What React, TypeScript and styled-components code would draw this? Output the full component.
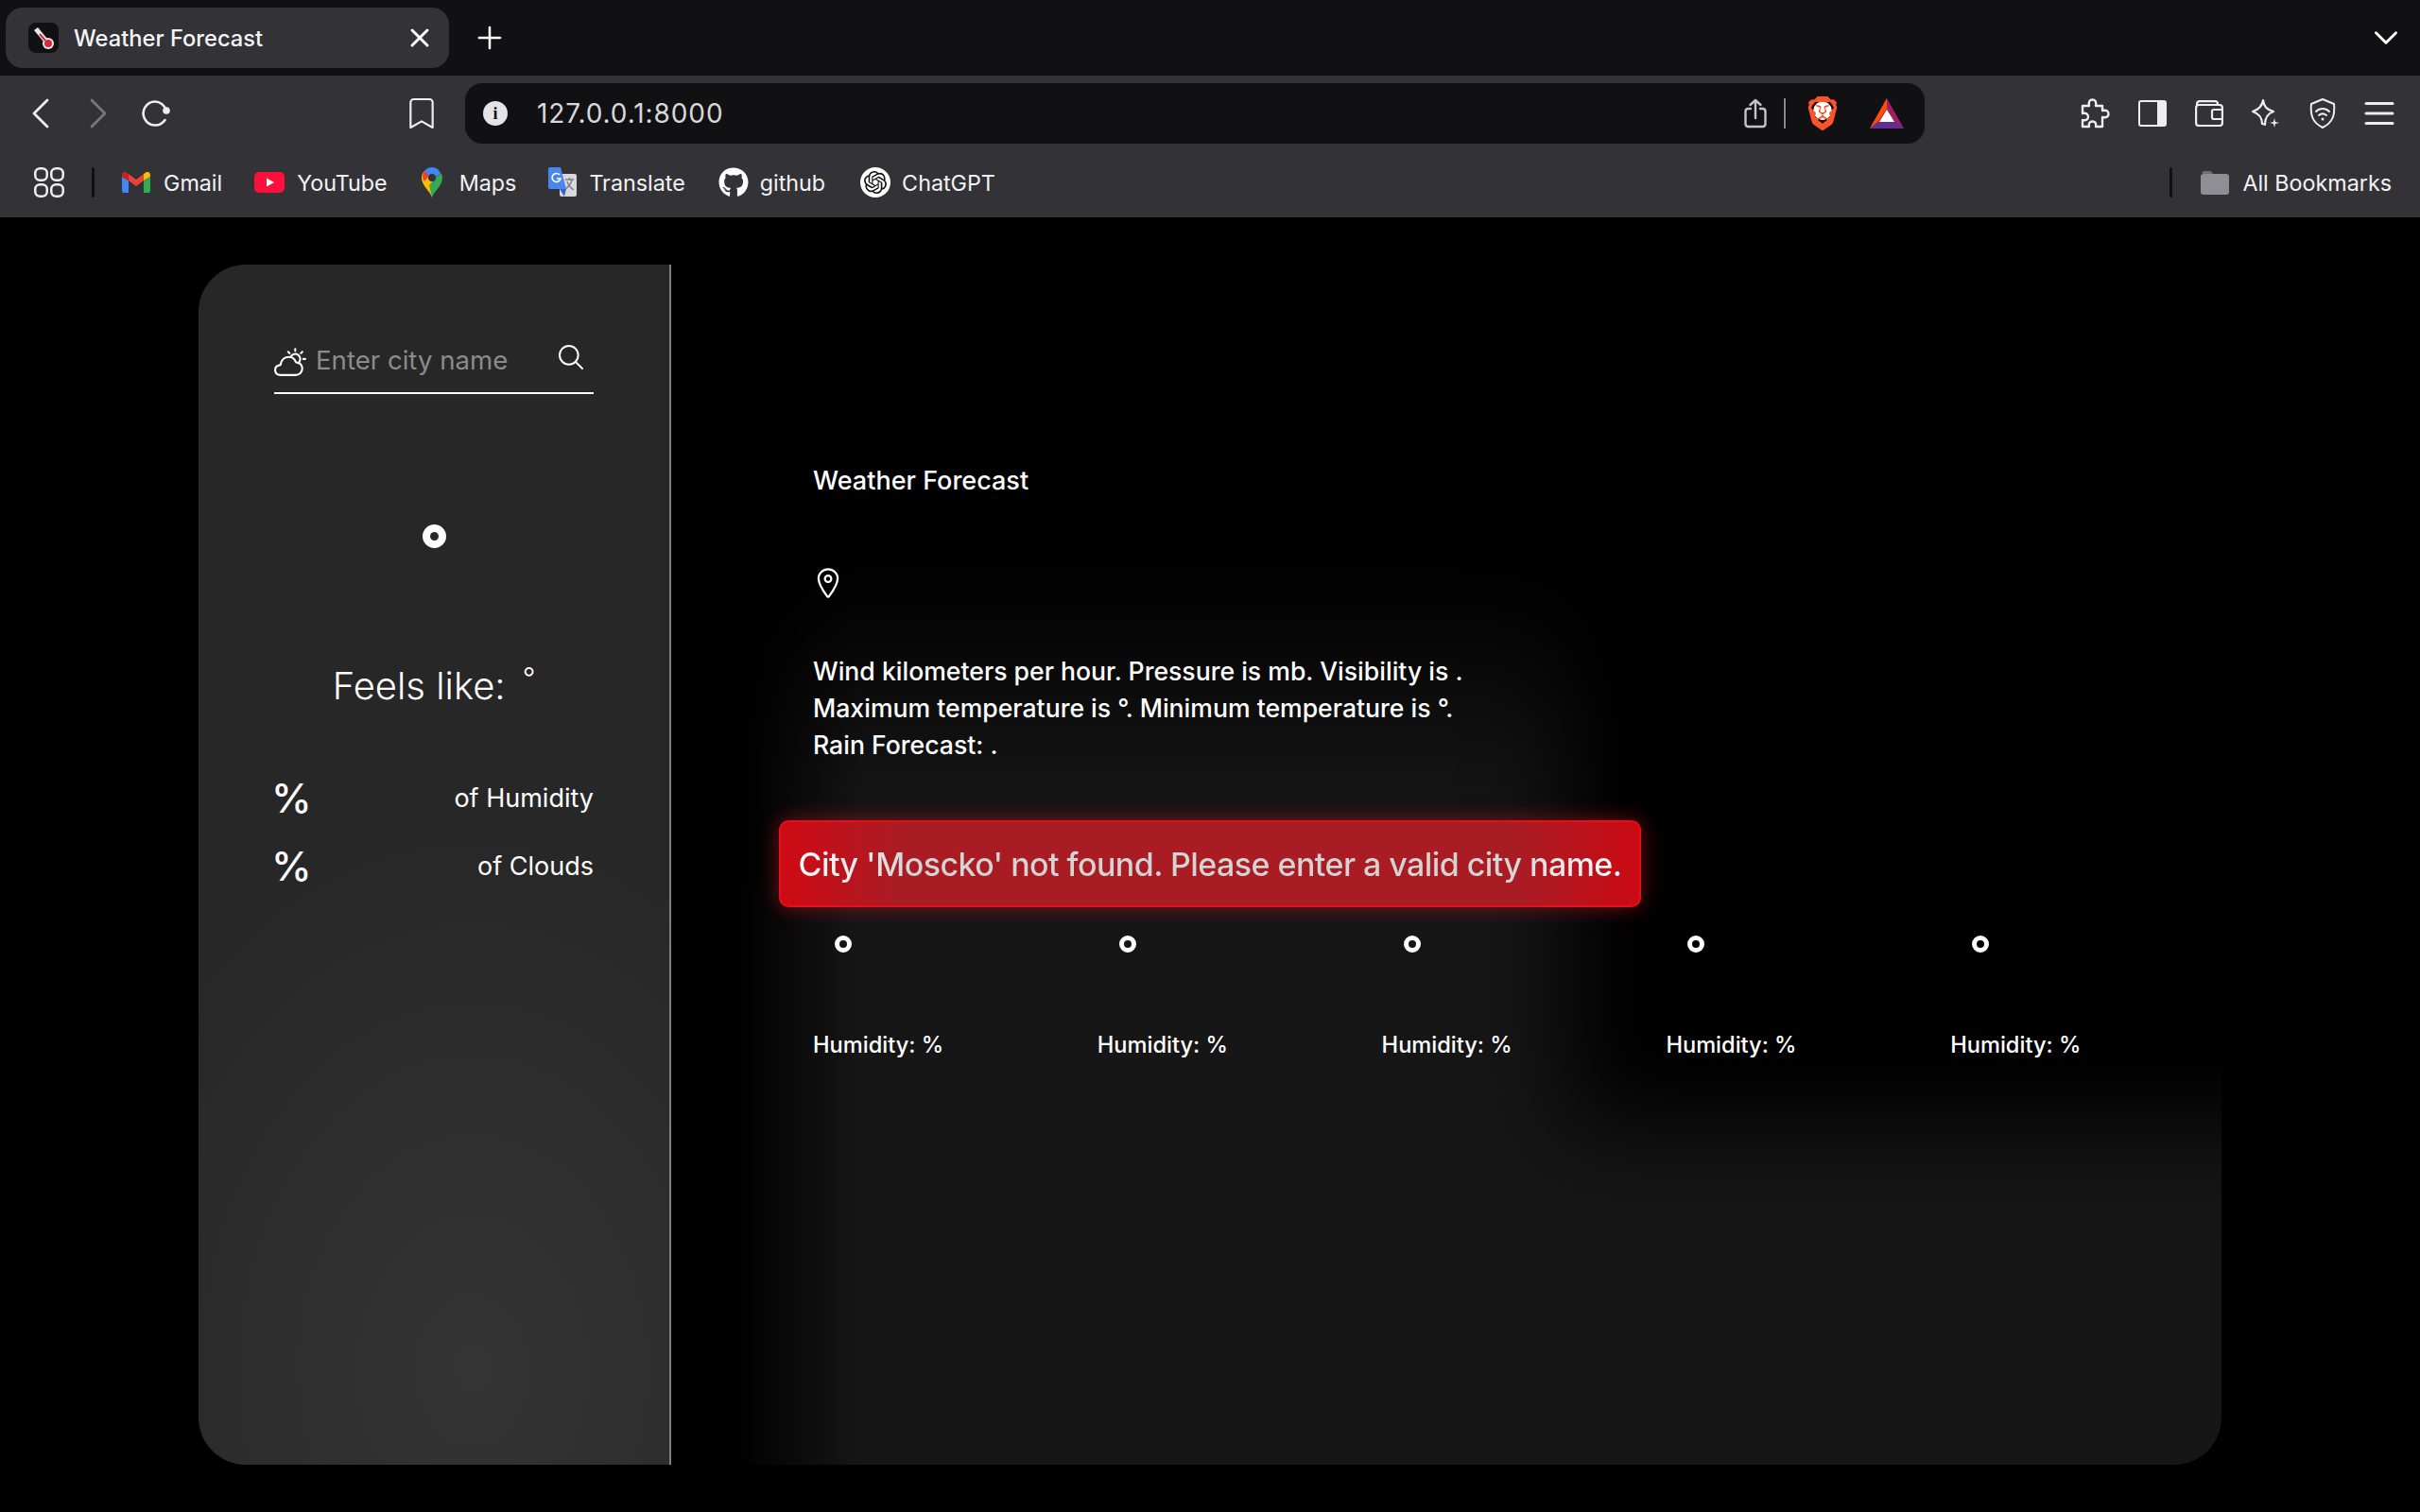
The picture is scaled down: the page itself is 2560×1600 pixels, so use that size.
import React from "react";
import styled, { createGlobalStyle } from "styled-components";
import { IoPartlySunnyOutline, IoSearchOutline, IoLocationOutline } from "react-icons/io5";
import { SiBrave, SiOpenai } from "react-icons/si";
import { FaGithub } from "react-icons/fa";
import { ChevronLeft, ChevronRight, ChevronDown, Bookmark, X, Plus } from "lucide-react";

const Global = createGlobalStyle`
  html, body { margin: 0; padding: 0; background: #000; }
  * { box-sizing: border-box; }
  body { font-family: Inter, "Liberation Sans", sans-serif; }
`;

const Window = styled.div`
  width: 2560px;
  height: 1600px;
  display: flex;
  flex-direction: column;
  background: #000;
  overflow: hidden;
`;

const TabStrip = styled.div`
  height: 80px;
  flex: none;
  background: #111113;
  display: flex;
  align-items: flex-start;
  padding: 8px 15px 0 6px;
  color: #fff;
`;
const Tab = styled.div`
  width: 469px;
  height: 64px;
  background: #323237;
  border-radius: 18px;
  display: flex;
  align-items: center;
  padding: 0 15px 0 24px;
`;
const Favicon = styled.span`
  width: 32px;
  height: 32px;
  background: #111113;
  border-radius: 8px;
  display: flex;
  align-items: center;
  justify-content: center;
  flex: none;
`;
const TabTitle = styled.span`
  margin-left: 16px;
  flex: 1;
  font-size: 23.7px;
  font-weight: 500;
  color: #f4f4f6;
`;
const NewTab = styled.span`
  height: 64px;
  margin-left: 24px;
  display: flex;
  align-items: center;
`;
const StripEnd = styled.span`
  margin-left: auto;
  height: 64px;
  display: flex;
  align-items: center;
`;

const Toolbar = styled.div`
  height: 76px;
  flex: none;
  background: #323237;
  display: flex;
  align-items: flex-start;
  padding: 8px 0 0 0;
  color: #eeeef0;
`;
const ToolSlot = styled.span<{ $w: number; $ml?: number; $dim?: boolean }>`
  width: ${(p) => p.$w}px;
  height: 64px;
  flex: none;
  margin-left: ${(p) => p.$ml ?? 0}px;
  display: flex;
  align-items: center;
  justify-content: center;
  color: ${(p) => (p.$dim ? "#77777c" : "#eeeef0")};
`;
const UrlBar = styled.div`
  width: 1544px;
  height: 64px;
  margin-left: 30px;
  flex: none;
  background: #111113;
  border-radius: 18px;
  display: flex;
  align-items: center;
  padding: 0 22px 0 19px;
`;
const InfoDot = styled.span`
  width: 26px;
  height: 26px;
  border-radius: 50%;
  background: #e4e4e8;
  color: #111113;
  font: 700 18px "Liberation Serif", serif;
  display: flex;
  align-items: center;
  justify-content: center;
  flex: none;
`;
const UrlText = styled.span`
  margin-left: 31px;
  flex: 1;
  font-size: 28px;
  letter-spacing: 0.9px;
  color: #d8d8dc;
`;
const UrlDivider = styled.span`
  width: 2px;
  height: 32px;
  background: #88888c;
  margin: 0 21px 0 18px;
  flex: none;
`;
const LionSlot = styled.span`
  display: flex;
  background: radial-gradient(circle at 50% 42%, #fff 0 34%, transparent 36%);
`;
const BatSlot = styled.span`
  margin-left: 32px;
  display: flex;
`;
const RightTools = styled.div`
  margin-left: 166px;
  display: flex;
  align-items: center;
  height: 64px;
  gap: 30px;
`;

const BookmarkBar = styled.div`
  height: 74px;
  flex: none;
  background: #323237;
  display: flex;
  align-items: center;
  padding: 0 30px 0 36px;
  color: #f2f2f4;
  font-size: 23.3px;
`;
const BarSep = styled.span<{ $ml: number; $mr: number }>`
  width: 3px;
  height: 32px;
  background: #111113;
  border-radius: 2px;
  margin-left: ${(p) => p.$ml}px;
  margin-right: ${(p) => p.$mr}px;
  flex: none;
`;
const Mark = styled.span<{ $w: number; $gap: number; $ml?: number }>`
  display: flex;
  align-items: center;
  margin-left: ${(p) => p.$ml ?? 0}px;
  & > svg, & > i { width: ${(p) => p.$w}px; flex: none; margin-right: ${(p) => p.$gap}px; }
`;
const GptBadge = styled.i`
  height: 32px;
  border-radius: 50%;
  background: #fff;
  color: #111;
  display: flex;
  align-items: center;
  justify-content: center;
`;
const Spacer = styled.span`
  flex: 1;
`;

const Page = styled.main`
  flex: 1;
  display: flex;
  padding: 50px 210px;
  background: #000;
  font-family: Inter, "Noto Sans", sans-serif;
  color: #fff;
`;
const Card = styled.section`
  flex: 1;
  display: flex;
  border-radius: 50px;
  overflow: hidden;
`;
const Side = styled.aside`
  width: 500px;
  flex: none;
  border-right: 2px solid #808080;
  background:
    radial-gradient(ellipse 430px 580px at 290px 1170px, #343434 0%, #272727 100%);
  padding: 0 80px;
  display: flex;
  flex-direction: column;
`;
const SearchRow = styled.div`
  margin-top: 80px;
  height: 57px;
  border-bottom: 2px solid #fff;
  display: flex;
  align-items: flex-start;
  color: #fff;
`;
const SearchInput = styled.input`
  flex: 1;
  min-width: 0;
  margin: 3px 0 0 10px;
  height: 36px;
  background: none;
  border: 0;
  outline: 0;
  padding: 0;
  font: 400 27.6px Inter, sans-serif;
  color: #fff;
  &::placeholder { color: #8b8b8b; opacity: 1; }
`;
const SearchBtn = styled.span`
  display: flex;
  margin: 2px 8px 0 0;
`;
const Ring = styled.span<{ $size: number; $wall: number }>`
  display: block;
  width: ${(p) => p.$size}px;
  height: ${(p) => p.$size}px;
  border: ${(p) => p.$wall}px solid #fff;
  border-radius: 50%;
`;
const MainRing = styled.div`
  margin-top: 138px;
  display: flex;
  justify-content: center;
`;
const Feels = styled.h2`
  margin: 121px 0 0;
  font-size: 40px;
  line-height: 50px;
  font-weight: 300;
  text-align: center;
  white-space: nowrap;
  & > sup { font-size: 30px; line-height: 0; margin-left: 18px; vertical-align: 12px; }
`;
const StatRow = styled.div<{ $mt: number }>`
  margin-top: ${(p) => p.$mt}px;
  display: flex;
  justify-content: space-between;
  align-items: center;
  height: 48px;
`;
const Pct = styled.span`
  margin-left: -3px;
  font-size: 43px;
  font-weight: 500;
  line-height: 48px;
`;
const StatLabel = styled.span`
  font-size: 27px;
  font-weight: 400;
`;

const Main = styled.div`
  flex: 1;
  min-width: 0;
  padding: 0 0 0 150px;
  display: flex;
  flex-direction: column;
  position: relative;
  overflow: hidden;
  background:
    linear-gradient(to right, #000 70px, rgba(0, 0, 0, 0) 200px),
    #161616;
  & > * { position: relative; z-index: 1; }
  &::before {
    content: "";
    position: absolute;
    left: 950px;
    top: -200px;
    right: -200px;
    height: 1110px;
    background: #000;
    filter: blur(50px);
  }
  &::after {
    content: "";
    position: absolute;
    left: -100px;
    top: -200px;
    right: -200px;
    height: 640px;
    background: #000;
    filter: blur(90px);
  }
`;
const Heading = styled.h1`
  margin: 210px 0 0;
  font-size: 27px;
  line-height: 38px;
  font-weight: 500;
`;
const PinWrap = styled.div`
  margin: 71px 0 0 -2px;
  height: 36px;
  display: flex;
`;
const Desc = styled.p`
  margin: 56px 0 0;
  font-size: 26.6px;
  line-height: 39px;
  font-weight: 450;
`;
const Alert = styled.div`
  margin: 60px 0 0 -36px;
  width: 912px;
  height: 92px;
  border: 2px solid #e5101e;
  border-radius: 10px;
  background: linear-gradient(90deg, #cf0a14 0%, #aa1c24 14%, #aa1c24 86%, #cb0a14 100%);
  box-shadow: 0 0 22px rgba(255, 20, 30, 0.45);
  display: flex;
  align-items: center;
  justify-content: center;
  font-size: 34px;
  letter-spacing: -0.56px;
  font-weight: 500;
  white-space: nowrap;
`;
const AlertText = styled.span`
  background: linear-gradient(90deg, #fff 0%, #d4d4d4 14%, #d4d4d4 86%, #fff 100%);
  -webkit-background-clip: text;
  background-clip: text;
  color: transparent;
`;
const Forecast = styled.div`
  display: grid;
  grid-template-columns: repeat(5, 300.8px);
  margin-top: 30px;
`;
const Day = styled.div`
  display: flex;
  flex-direction: column;
  align-items: flex-start;
`;
const DayRing = styled.div`
  padding-left: 23px;
`;
const DayHumidity = styled.span`
  margin-top: 80px;
  font-size: 23.6px;
  line-height: 36px;
  font-weight: 450;
`;

const Thermo = () => (
  <svg width="28" height="28" viewBox="0 0 28 28">
    <path d="M4 6 L8 3 L18 15 L14 18 Z" fill="#e8e8ea" />
    <circle cx="19" cy="20" r="6" fill="#e8e8ea" />
    <circle cx="19" cy="20" r="4" fill="#d8283c" />
    <path d="M10 10 L16 17" stroke="#d8283c" strokeWidth="2" />
  </svg>
);
const GmailIcon = () => (
  <svg viewBox="0 0 30 22" height="22">
    <path d="M0 5 V20 a2 2 0 0 0 2 2 H7 V9 Z" fill="#4285f4" />
    <path d="M30 5 V20 a2 2 0 0 1 -2 2 H23 V9 Z" fill="#34a853" />
    <path d="M7 9 L15 15 L23 9 V2 L15 8 L7 2 Z" fill="#ea4335" />
    <path d="M0 5 L7 9 V2 L4 0 Q0 -1 0 4 Z" fill="#c5221f" />
    <path d="M30 5 L23 9 V2 L26 0 Q30 -1 30 4 Z" fill="#fbbc04" />
  </svg>
);
const YtIcon = () => (
  <svg viewBox="0 0 32 22" height="22">
    <rect width="32" height="22" rx="5" fill="#ff0f3c" />
    <path d="M13 6.5 L21 11 L13 15.5 Z" fill="#fff" />
  </svg>
);
const MapsIcon = () => (
  <svg viewBox="0 0 22 32" height="32">
    <path d="M11 32 C9 25 0 20 0 11 C0 8 1 6 3 4 L11 12 Z" fill="#fbbc04" />
    <path d="M11 32 C13 25 22 20 22 11 C22 9 21 7 20 6 L8 19 Z" fill="#34a853" />
    <path d="M11 0 C15 0 18 2 20 6 L14 12 L8 7 Z" fill="#4285f4" />
    <path d="M3 4 C5 1.500 8 0 11 0 L14 3 L8 9 Z" fill="#4285f4" />
    <path d="M3 4 L8 9 L3 15 C1 12 0 8 3 4 Z" fill="#ea4335" />
    <circle cx="11" cy="11" r="4" fill="#323237" />
  </svg>
);
const TranslateIcon = () => (
  <svg viewBox="0 0 30 32" height="32">
    <rect x="12" y="7" width="18" height="24" rx="2" fill="#d8d8da" />
    <path d="M18 13 H27 M22.500 11 V13 M25 13 C24 18 21 21 18 23 M20 15 C21 19 24 22 27 24" stroke="#7a8088" strokeWidth="1.300" fill="none" />
    <path d="M2 0 H13 L19 23 H2 A2 2 0 0 1 0 21 V2 A2 2 0 0 1 2 0 Z" fill="#4a86f0" />
    <path d="M12 23 L17 31 L19 23 Z" fill="#3a62c0" />
    <path d="M12 8 A4.500 4.500 0 1 0 13 12 H9" stroke="#fff" strokeWidth="1.600" fill="none" />
  </svg>
);
const ReloadIcon = () => (
  <svg width="32" height="28" viewBox="0 0 32 28" fill="none">
    <path d="M26 11 C24 5 19 1.500 14 1.500 A12.500 12.500 0 1 0 24.500 21" stroke="#eeeef0" strokeWidth="2.600" strokeLinecap="round" />
    <circle cx="26" cy="11" r="3.800" fill="#eeeef0" />
  </svg>
);
const ShareIcon = () => (
  <svg width="24" height="32" viewBox="0 0 24 32" fill="none" stroke="#c4c4c8" strokeWidth="2.400" strokeLinecap="round" strokeLinejoin="round" style={{ flex: "none" }}>
    <path d="M7 11 H4 A3 3 0 0 0 1.500 14 V27 A3 3 0 0 0 4 30 H20 A3 3 0 0 0 22.500 27 V14 A3 3 0 0 0 20 11 H17" />
    <path d="M12 21 V2 M6.500 7 L12 2 L17.500 7" />
  </svg>
);
const Bat = () => (
  <svg width="36" height="32" viewBox="0 0 36 32" style={{ display: "block" }}>
    <path d="M18 0 L36 32 H0 Z" fill="#9e1f63" />
    <path d="M18 0 V11 L7 27 L0 32 Z" fill="#ff5000" />
    <path d="M0 32 L8 25 H28 L36 32 Z" fill="#662d91" />
    <path d="M18 12 L26 25 H10 Z" fill="#fff" />
  </svg>
);
const AppsIcon = () => (
  <svg width="32" height="32" viewBox="0 0 32 32" fill="none" stroke="#eeeef0" strokeWidth="2.500" style={{ flex: "none" }}>
    <rect x="1.250" y="1.250" width="12.500" height="12.500" rx="5" />
    <rect x="18.250" y="1.250" width="12.500" height="12.500" rx="5" />
    <rect x="1.250" y="18.250" width="12.500" height="12.500" rx="5" />
    <rect x="18.250" y="18.250" width="12.500" height="12.500" rx="5" />
  </svg>
);
const PuzzleIcon = () => (
  <svg width="32" height="32" viewBox="0 0 32 32" fill="none" stroke="#eeeef0" strokeWidth="2.400" strokeLinejoin="round" style={{ flex: "none" }}>
    <path d="M2 8 H9 C8 3 10 1.500 12.500 1.500 C15 1.500 17 3 16 8 H23 V13 C28 12 29.500 14 29.500 16.500 C29.500 19 28 21 23 20 V30 H16 C17 26 15 24.500 12.500 24.500 C10 24.500 8 26 9 30 H2 V23 C6 24 8 22 8 19.500 C8 17 6 15 2 16 Z" />
  </svg>
);
const PanelIcon = () => (
  <svg width="30" height="28" viewBox="0 0 30 28" style={{ flex: "none" }}>
    <rect x="1" y="1" width="28" height="26" rx="2" fill="none" stroke="#eeeef0" strokeWidth="2" />
    <rect x="20" y="1" width="9" height="26" fill="#eeeef0" />
  </svg>
);
const WalletIcon = () => (
  <svg width="30" height="28" viewBox="0 0 30 28" fill="none" stroke="#eeeef0" strokeWidth="2.200" style={{ flex: "none" }}>
    <rect x="1.100" y="5" width="27.800" height="22" rx="3" />
    <path d="M2 5 V4 A3 3 0 0 1 5 1.100 H21 A3 3 0 0 1 24 4 V5" />
    <path d="M29 10 H20 A2 2 0 0 0 18 12 V18 A2 2 0 0 0 20 20 H29" />
  </svg>
);
const SparkleIcon = () => (
  <svg width="32" height="32" viewBox="0 0 32 32" fill="none" stroke="#eeeef0" strokeWidth="2.200" style={{ flex: "none" }}>
    <path d="M13 2 C14 9 17 12 24 14 C18 16 15 20 15 28 C14 27 13 27 12 27 C12 20 8 16 2 14 C8 12 12 9 13 2 Z" strokeLinejoin="round" />
    <path d="M25 21 L26 25 L30 26 L26 27 L25 31 L24 27 L20 26 L24 25 Z" fill="#eeeef0" stroke="none" />
  </svg>
);
const ShieldIcon = () => (
  <svg width="28" height="32" viewBox="0 0 28 32" fill="none" stroke="#eeeef0" strokeWidth="2" style={{ flex: "none" }}>
    <path d="M14 1 L26 6 C27 16 26 25 14 31 C2 25 1 16 2 6 Z" strokeLinejoin="round" />
    <path d="M7 14 C11 10 17 10 21 14 M10 18 C12.500 16 15.500 16 18 18" strokeLinecap="round" />
    <circle cx="14" cy="22" r="1.500" fill="#eeeef0" stroke="none" />
  </svg>
);
const MenuIcon = () => (
  <svg width="32" height="24" viewBox="0 0 32 24" style={{ flex: "none" }}>
    <rect x="0.500" y="0" width="31" height="3" rx="1.500" fill="#eeeef0" />
    <rect x="0.500" y="10.500" width="31" height="3" rx="1.500" fill="#eeeef0" />
    <rect x="0.500" y="21" width="31" height="3" rx="1.500" fill="#eeeef0" />
  </svg>
);
const FolderIcon = () => (
  <svg viewBox="0 0 30 25" height="25">
    <path d="M2 3 A2 2 0 0 1 4 0 H11 L13 3 Z" fill="#6e6e74" />
    <rect y="3" width="30" height="22" rx="3" fill="#8e8e94" />
  </svg>
);

const Stat = ({ label, mt }: { label: string; mt: number }) => (
  <StatRow $mt={mt}>
    <Pct>%</Pct>
    <StatLabel>{label}</StatLabel>
  </StatRow>
);

export default function App() {
  return (
    <Window>
      <Global />
      <TabStrip>
        <Tab>
          <Favicon><Thermo /></Favicon>
          <TabTitle>Weather Forecast</TabTitle>
          <X size={32} strokeWidth={2.25} />
        </Tab>
        <NewTab><Plus size={38} strokeWidth={1.6} /></NewTab>
        <StripEnd><ChevronDown size={42} strokeWidth={1.7} /></StripEnd>
      </TabStrip>
      <Toolbar>
        <ToolSlot $w={86}><ChevronLeft size={56} strokeWidth={1.2} style={{ flex: "none" }} /></ToolSlot>
        <ToolSlot $w={36} $dim><ChevronRight size={56} strokeWidth={1.2} style={{ flex: "none" }} /></ToolSlot>
        <ToolSlot $w={84} $ml={2}><ReloadIcon /></ToolSlot>
        <ToolSlot $w={32} $ml={222}><Bookmark size={40} strokeWidth={1.3} style={{ flex: "none" }} /></ToolSlot>
        <UrlBar>
          <InfoDot>i</InfoDot>
          <UrlText>127.0.0.1:8000</UrlText>
          <ShareIcon />
          <UrlDivider />
          <LionSlot><SiBrave size={36} color="#fb542b" /></LionSlot>
          <BatSlot><Bat /></BatSlot>
        </UrlBar>
        <RightTools>
          <ToolSlot $w={30}><PuzzleIcon /></ToolSlot>
          <ToolSlot $w={30}><PanelIcon /></ToolSlot>
          <ToolSlot $w={30}><WalletIcon /></ToolSlot>
          <ToolSlot $w={30}><SparkleIcon /></ToolSlot>
          <ToolSlot $w={30}><ShieldIcon /></ToolSlot>
          <ToolSlot $w={30}><MenuIcon /></ToolSlot>
        </RightTools>
      </Toolbar>
      <BookmarkBar>
        <AppsIcon />
        <BarSep $ml={29} $mr={29} />
        <Mark $w={30} $gap={14}><GmailIcon />Gmail</Mark>
        <Mark $w={32} $gap={13} $ml={34}><YtIcon />YouTube</Mark>
        <Mark $w={22} $gap={18} $ml={36}><MapsIcon />Maps</Mark>
        <Mark $w={30} $gap={13} $ml={34}><TranslateIcon />Translate</Mark>
        <Mark $w={32} $gap={12} $ml={35}><FaGithub size={32} color="#fff" />github</Mark>
        <Mark $w={32} $gap={12} $ml={37}><GptBadge><SiOpenai size={24} /></GptBadge>ChatGPT</Mark>
        <Spacer />
        <BarSep $ml={0} $mr={30} />
        <Mark $w={30} $gap={14}><FolderIcon />All Bookmarks</Mark>
      </BookmarkBar>
      <Page>
        <Card>
          <Side>
            <SearchRow>
              <IoPartlySunnyOutline size={34} style={{ flex: "none", marginTop: 6 }} />
              <SearchInput placeholder="Enter city name" readOnly />
              <SearchBtn><IoSearchOutline size={32} /></SearchBtn>
            </SearchRow>
            <MainRing><Ring $size={25} $wall={8.5} /></MainRing>
            <Feels>Feels like:<sup>°</sup></Feels>
            <Stat label="of Humidity" mt={69} />
            <Stat label="of Clouds" mt={24} />
          </Side>
          <Main>
            <Heading>Weather Forecast</Heading>
            <PinWrap><IoLocationOutline size={36} /></PinWrap>
            <Desc>
              Wind kilometers per hour. Pressure is mb. Visibility is .<br />
              Maximum temperature is °. Minimum temperature is °.<br />
              Rain Forecast: .
            </Desc>
            <Alert><AlertText>City &apos;Moscko&apos; not found. Please enter a valid city name.</AlertText></Alert>
            <Forecast>
              {[0, 1, 2, 3, 4].map((i) => (
                <Day key={i}>
                  <DayRing><Ring $size={18} $wall={5} /></DayRing>
                  <DayHumidity>Humidity: %</DayHumidity>
                </Day>
              ))}
            </Forecast>
          </Main>
        </Card>
      </Page>
    </Window>
  );
}
